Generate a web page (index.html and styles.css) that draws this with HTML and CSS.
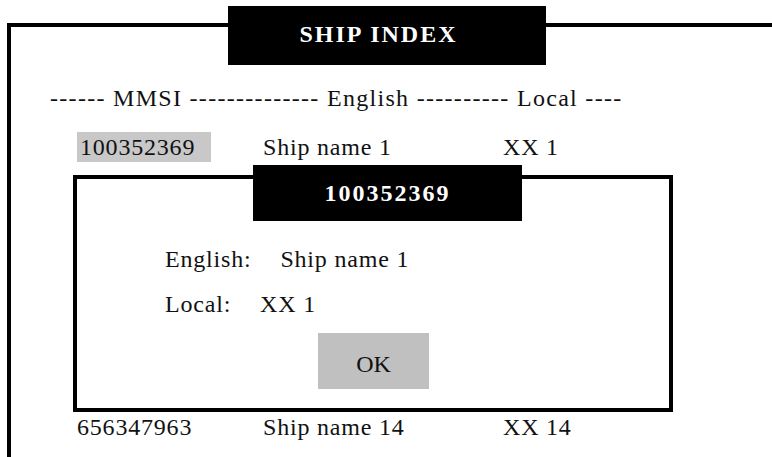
FILE: index.html
```html
<!DOCTYPE html>
<html lang="en">
<head>
    <meta charset="UTF-8">
    <title>Ship Index</title>
    <link rel="stylesheet" href="styles.css">
</head>
<body>
    <div class="frame">
        <div class="frame-title">SHIP INDEX</div>
        <div class="list-head">------ MMSI -------------- English ---------- Local ----</div>

        <div class="row">
            <span class="mmsi selected">100352369</span>
            <span>Ship name 1</span>
            <span>XX 1</span>
        </div>

        <!-- 详情弹窗 -->
        <div class="dialog">
            <div class="dialog-title">100352369</div>
            <div class="field"><span class="label">English:</span>Ship name 1</div>
            <div class="field"><span class="label">Local:</span>XX 1</div>
            <button class="ok">OK</button>
        </div>

        <div class="row">
            <span class="mmsi">656347963</span>
            <span>Ship name 14</span>
            <span>XX 14</span>
        </div>
    </div>
</body>
</html>
```

FILE: styles.css
```css
body {
    font-family: "Liberation Serif", "Times New Roman", serif;
    font-size: 24px;
    letter-spacing: 0.8px;
    color: #111;
    background: #fff;
    margin: 0;
}
.frame {
    position: relative;
    margin: 23px 0 0 7px;
    height: 434px;
    box-sizing: border-box;
    border-left: 4px solid #000;
    border-top: 4px solid #000;
    padding-top: 59px;
}
.frame-title {
    position: absolute;
    left: 217px;
    top: -21px;
    width: 318px;
    height: 59px;
    box-sizing: border-box;
    padding: 0 17px 2px 0;
    background: #000;
    color: #fff;
    font-weight: bold;
    letter-spacing: 2px;
    display: flex;
    align-items: center;
    justify-content: center;
}
.list-head {
    padding-left: 39px;
    height: 24px;
    line-height: 24px;
    letter-spacing: 1.3px;
    white-space: nowrap;
}
.row {
    display: grid;
    grid-template-columns: 186px 240px auto;
    margin-left: 66px;
    margin-top: 22px;
    height: 30px;
    line-height: 30px;
    white-space: nowrap;
}
.selected {
    padding-left: 3px;
    background: #c8c8c8;
    width: 131px;
}
.dialog {
    position: relative;
    margin: 13px 0 0 62px;
    width: 600px;
    height: 237px;
    box-sizing: border-box;
    border: 4px solid #000;
    padding: 68px 0 0 88px;
}
.dialog + .row {
    margin-top: 0;
    height: 28px;
}
.dialog-title {
    position: absolute;
    left: 176px;
    top: -14px;
    width: 269px;
    height: 56px;
    background: #000;
    color: #fff;
    font-weight: bold;
    letter-spacing: 2px;
    display: flex;
    align-items: center;
    justify-content: center;
}
.field {
    height: 24px;
    line-height: 24px;
    margin-bottom: 21px;
}
.field + .field {
    margin-bottom: 17px;
}
.label {
    display: inline-block;
    margin-right: 29px;
}
.ok {
    display: block;
    margin: 0 0 0 153px;
    width: 111px;
    height: 56px;
    border: none;
    background: #c0c0c0;
    font: inherit;
    padding: 6px 0 0;
    color: #111;
}
```
